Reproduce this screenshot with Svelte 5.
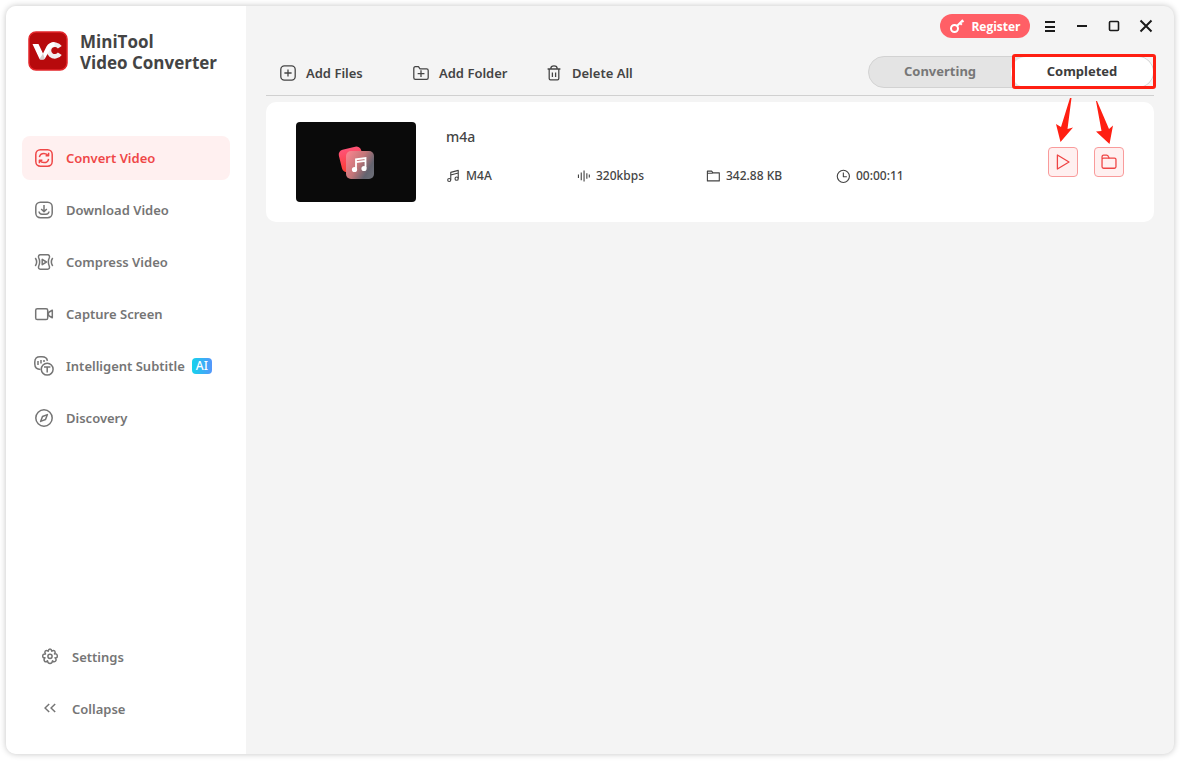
<script lang="ts">
	let section = $state('convert');
	let tab = $state('completed');

	const nav = [
		{ id: 'convert', label: 'Convert Video' },
		{ id: 'download', label: 'Download Video' },
		{ id: 'compress', label: 'Compress Video' },
		{ id: 'capture', label: 'Capture Screen' },
		{ id: 'subtitle', label: 'Intelligent Subtitle', badge: 'AI' },
		{ id: 'discovery', label: 'Discovery' }
	];

	const file = {
		name: 'm4a',
		meta: [
			{ icon: 'note', text: 'M4A' },
			{ icon: 'bitrate', text: '320kbps' },
			{ icon: 'size', text: '342.88 KB' },
			{ icon: 'clock', text: '00:00:11' }
		]
	};
</script>

{#snippet icon(name: string)}
	<svg class="icon" viewBox="0 0 20 20" aria-hidden="true">
		{#if name === 'convert'}
			<rect x="1.8" y="1.8" width="16.4" height="16.4" rx="4.6" />
			<path d="M5.4 9.2C5.8 6.8 7.7 5.4 10 5.4c1.8 0 3.2.8 4.2 2.2M14.6 4.8v3h-3M14.6 10.8c-.4 2.4-2.3 3.8-4.6 3.8-1.8 0-3.2-.8-4.2-2.2M5.4 15.2v-3h3" />
		{:else if name === 'download'}
			<rect x="1.8" y="2.3" width="16.4" height="15.4" rx="4.6" />
			<path d="M10 5v6.5M7.2 9l2.8 2.8L12.8 9M5 11.5c.3 1.9 1.3 2.7 3 2.7h4c1.7 0 2.7-.8 3-2.7" />
		{:else if name === 'compress'}
			<path d="M4.6 5.500C4.200 4 4.800 2.800 6.300 2.800h7.400c1.500 0 2.100 1.200 1.700 2.700M4.600 14.500C4.200 16 4.800 17.200 6.300 17.200h7.400c1.500 0 2.100-1.200 1.700-2.700M1.300 6c1.700 2.500 1.700 5.500 0 8M4.600 5.500c1.400 3 1.400 6 0 9M18.700 6c-1.700 2.500-1.700 5.500 0 8M15.400 5.500c-1.400 3-1.400 6 0 9M8.200 7.300v5.400l4.200-2.700z" />
		{:else if name === 'capture'}
			<rect x="1.7" y="4.7" width="12" height="10.8" rx="1.6" />
			<path d="M18.3 6.2v7.6L14.5 11.5v-3z" />
		{:else if name === 'subtitle'}
			<path d="M6.5 13.400C3 13.400.8 11.800.8 8V6C.8 2.400 2.600.8 6 .8h2c3 0 5 1.200 5.400 4M4 5v4M7 4v3.500M10 4v2" />
			<circle cx="13.2" cy="13.2" r="5.9" />
			<path d="M10 11h6.400M13.200 11v5.600" />
		{:else if name === 'discovery'}
			<circle cx="10" cy="10" r="8.2" />
			<path d="M13.4 6.6l-1.9 4.9-4.9 1.9 1.9-4.9z" />
		{:else if name === 'settings'}
			<path d="M8.200 4.200Q8.500 2 10 2t1.800 2.200Q13.600 2.900 14.700 4t-.2 2.900Q17.300 6.500 17.300 9t-2.300 1.800Q17 12.800 15.400 14.200t-2.900-.4Q12.300 16.600 10 16.600t-2.500-2.800Q5.900 15.700 4.600 14.200T5 10.800Q2.700 11.200 2.700 9t2.800-2.100Q4.200 5.100 5.300 4t2.900.2z" />
			<circle cx="10" cy="9.3" r="2.1" />
		{:else if name === 'collapse'}
			<path d="M9.2 5L5 9l4.2 4M15.2 5l-4.200 4 4.200 4" />
		{:else if name === 'add-file'}
			<rect x="1" y="1" width="18" height="18" rx="4.5" />
			<path d="M10 5.5v9M5.5 10h9" />
		{:else if name === 'add-folder'}
			<path d="M1 4.500c0-1.500.7-2.500 2-2.500h3.800l2 2.800H17c1.400 0 2 .6 2 2V16c0 1.400-.7 2-2 2H3c-1.300 0-2-.6-2-2zM10 6.500v8.500M5.800 10.700h8.500" />
		{:else if name === 'trash'}
			<path d="M2 5h16M4 5v12c0 1 .6 1.700 1.600 1.700h8.800c1 0 1.600-.7 1.600-1.700V5M6 4.500C6 2 7.300 1 10 1s4 1 4 3.500M8 9.500v5.500M12 9.500v5.500" />
		{:else if name === 'note'}
			<path d="M6.8 15.5V4.8L17.5 2v11.500M6.800 8.500l10.700-2.800" />
			<circle cx="4.6" cy="15.7" r="2.2" />
			<circle cx="15.2" cy="13.8" r="2.3" />
		{:else if name === 'bitrate'}
			<path d="M3.500 8v5M7.500 5v11M11.500 2v16M15.500 6v8M19 8v4" />
		{:else if name === 'size'}
			<path d="M2 3h6l2 2.500h9V17H2zM2 6h7.500" />
		{:else if name === 'clock'}
			<circle cx="10.5" cy="10.5" r="8.7" />
			<path d="M10.500 5v6h5" />
		{:else if name === 'folder'}
			<path d="M1.300 6V4c0-1.700.6-2.500 2-2.500h3.700c1 0 1.700.4 2.100 1.400L10.300 5.600" />
			<rect x="1.3" y="5.2" width="17.4" height="12.6" rx="1.8" />
		{:else if name === 'play'}
			<path d="M3 1.200v17.600L17.500 10z" />
		{/if}
	</svg>
{/snippet}

<div class="window">
	<aside>
		<div class="brand">
			<svg class="logo" viewBox="0 0 40 40" aria-hidden="true">
				<rect x="1" y="1" width="38" height="38" rx="7" fill="#b70a0c" stroke="#e3262a" stroke-width="1.5" />
				<path d="M31.800 16.300A5.900 5.900 0 1 0 31.800 22.700" fill="none" stroke="#f1eded" stroke-width="4.6" />
				<path d="M4.500 13h6l4.500 9.500 3.500-7q2.500-4.500 8-4.500v4.500q-3 .2-4.500 3L17 27.500q-.6 1-2 1h-2q-1.200 0-1.700-1z" fill="#fff" />
				<path d="M15 22.500l1.800 5.200q-.6.800-1.800.8h-2q-1 0-1.500-.6z" fill="#d5cfcf" />
			</svg>
			<h1>MiniTool<br />Video Converter</h1>
		</div>

		<nav aria-label="Main">
			{#each nav as item}
				<button class="item" class:active={section === item.id} onclick={() => (section = item.id)}>
					{@render icon(item.id)}
					{item.label}
					{#if item.badge}<span class="badge">{item.badge}</span>{/if}
				</button>
			{/each}
		</nav>

		<div class="bottom">
			<button class="item">{@render icon('settings')}Settings</button>
			<button class="item">{@render icon('collapse')}Collapse</button>
		</div>
	</aside>

	<main>
		<header>
			<button class="register">
				<svg viewBox="0 0 16 16" aria-hidden="true">
					<circle cx="5.5" cy="10.5" r="3.5" />
					<path d="M8.2 7.8L14 2M11 5l1.8 1.8M13 2.5l1.5 1.5" />
				</svg>
				Register
			</button>
			<button class="control" aria-label="Menu">
				<svg viewBox="0 0 16 16"><path d="M3 4h10M3 9h10M3 13h10" /></svg>
			</button>
			<button class="control" aria-label="Minimize">
				<svg viewBox="0 0 16 16"><path d="M3 8h10" /></svg>
			</button>
			<button class="control" aria-label="Maximize">
				<svg viewBox="0 0 16 16"><rect x="3.5" y="3.5" width="9" height="9" rx="1" stroke-width="1.6" /></svg>
			</button>
			<button class="control" aria-label="Close">
				<svg viewBox="0 0 16 16"><path d="M2.5 2.5l11 11M13.5 2.5l-11 11" /></svg>
			</button>
		</header>

		<div class="toolbar">
			<div class="actions">
				<button>{@render icon('add-file')}Add Files</button>
				<button>{@render icon('add-folder')}Add Folder</button>
				<button>{@render icon('trash')}Delete All</button>
			</div>
			<div class="tabs">
				<button class:active={tab === 'converting'} onclick={() => (tab = 'converting')}>Converting</button>
				<button class:active={tab === 'completed'} onclick={() => (tab = 'completed')}>Completed</button>
				<span class="highlight"></span>
			</div>
		</div>

		<article class="card">
			<div class="thumb">
				<svg viewBox="0 0 40 40" aria-hidden="true">
					<defs>
						<linearGradient id="back" x1="0" y1="0" x2="0" y2="1">
							<stop offset="0" stop-color="#ff5377" />
							<stop offset="1" stop-color="#fb3b30" />
						</linearGradient>
						<linearGradient id="glass" x1="0" y1="0.2" x2="1" y2="0.8">
							<stop offset="0" stop-color="#f5838d" />
							<stop offset="0.45" stop-color="#c37578" />
							<stop offset="0.8" stop-color="#63636f" />
							<stop offset="1" stop-color="#6b6d76" />
						</linearGradient>
					</defs>
					<rect x="4" y="6" width="23" height="23" rx="5" transform="rotate(-14 15 17)" fill="url(#back)" />
					<rect x="10" y="9" width="28" height="28" rx="5" fill="url(#glass)" />
					<path d="M20 27.5V17.3l9.5-1.3v10M20 20.2l9.5-1.3" fill="none" stroke="#fff" stroke-width="1.8" />
					<circle cx="18.5" cy="27.5" r="2.6" fill="#fff" />
					<circle cx="28" cy="26.5" r="2.6" fill="#fff" />
				</svg>
			</div>
			<div class="info">
				<h2>{file.name}</h2>
				<ul>
					{#each file.meta as m}
						<li>{@render icon(m.icon)}{m.text}</li>
					{/each}
				</ul>
			</div>
			<div class="open">
				<button aria-label="Play">{@render icon('play')}</button>
				<button aria-label="Open folder">{@render icon('folder')}</button>
				<svg class="arrows" viewBox="0 0 76 50" aria-hidden="true">
					<path d="M22 1h1.500l-4 31 5.500-1.500L12.500 45 8 27l5 3z" />
					<path d="M48 4h1l12 28 4-3.500L61.500 47 48 34.500l5.500-.5z" />
				</svg>
			</div>
		</article>
	</main>
</div>

<style>
	:global(body) {
		background: #fff;
	}

	.window {
		display: flex;
		box-sizing: border-box;
		min-height: calc(100vh - 14px);
		margin: 6px 6px 8px;
		border-radius: 10px;
		overflow: hidden;
		background: #f4f4f4;
		box-shadow: 0 0 6px rgba(0, 0, 0, 0.24);
		font-family: 'Noto Sans', 'Open Sans', sans-serif;
		color: #444;
	}

	button {
		border: 0;
		margin: 0;
		padding: 0;
		background: none;
		font: inherit;
		color: inherit;
		cursor: pointer;
	}

	svg {
		display: block;
		flex: none;
	}

	.icon {
		width: 16px;
		height: 16px;
		fill: none;
		stroke: currentColor;
		stroke-width: 1.6;
		stroke-linejoin: round;
	}

	aside {
		display: flex;
		flex-direction: column;
		flex: none;
		box-sizing: border-box;
		width: 240px;
		padding: 24px 16px 23px;
		background: #fff;
	}

	.brand {
		display: flex;
		align-items: center;
		gap: 12px;
		height: 42px;
		padding-left: 6px;
		margin-bottom: 64px;
	}

	.logo {
		width: 40px;
		height: 40px;
	}

	h1 {
		margin: 0;
		padding-top: 2px;
		font-family: 'Open Sans', 'Noto Sans', sans-serif;
		font-size: 17px;
		font-weight: 700;
		line-height: 21px;
		white-space: nowrap;
	}

	nav,
	.bottom {
		display: flex;
		flex-direction: column;
		gap: 8px;
	}

	.bottom {
		margin-top: auto;
		padding-left: 6px;
	}

	.item {
		display: flex;
		align-items: center;
		height: 44px;
		padding-left: 12px;
		border-radius: 8px;
		font-size: 13px;
		font-weight: 600;
		color: #757575;
		white-space: nowrap;
	}

	.item .icon {
		width: 20px;
		height: 20px;
		margin-right: 12px;
		stroke-width: 1.5;
	}

	.item.active {
		background: #fff0f0;
		color: #ef4747;
	}

	.badge {
		margin-left: 7px;
		padding: 0 4px;
		border-radius: 4px;
		background: linear-gradient(90deg, #14d3ec, #5596fb);
		font-size: 12px;
		font-weight: 500;
		line-height: 16px;
		color: #fff;
	}

	main {
		flex: 1;
		min-width: 0;
		padding: 8px 20px 20px;
	}

	header {
		display: flex;
		justify-content: flex-end;
		align-items: center;
		gap: 16px;
		height: 24px;
		margin-bottom: 18px;
	}

	.register {
		display: flex;
		align-items: center;
		justify-content: center;
		gap: 6px;
		width: 90px;
		height: 24px;
		margin-right: -4px;
		border-radius: 12px;
		background: #ff5f66;
		font-family: 'Open Sans', 'Noto Sans', sans-serif;
		font-size: 12px;
		font-weight: 700;
		color: #fff;
	}

	.register svg {
		width: 16px;
		height: 16px;
		fill: none;
		stroke: #fff;
		stroke-width: 2;
	}

	.control svg {
		width: 16px;
		height: 16px;
		fill: none;
		stroke: #1a1a1a;
		stroke-width: 2;
	}

	.toolbar {
		display: flex;
		justify-content: space-between;
		height: 39px;
		border-bottom: 1px solid #d0d0d0;
	}

	.actions {
		display: flex;
		height: 33px;
		padding-left: 14px;
	}

	.actions button {
		display: flex;
		align-items: center;
		gap: 10px;
		min-width: 133px;
		font-size: 13px;
		font-weight: 600;
		white-space: nowrap;
	}

	.tabs {
		position: relative;
		display: flex;
		box-sizing: border-box;
		width: 286px;
		height: 32px;
		border: 1px solid #d2d2d2;
		border-radius: 16px;
		background: #e4e4e4;
	}

	.tabs button {
		flex: 1;
		padding-bottom: 2px;
		border-radius: 16px;
		font-size: 13px;
		font-weight: 700;
		color: #777;
	}

	.tabs .active {
		background: #fff;
		color: #3c3c3c;
	}

	/* callout frame round the completed tab */
	.highlight {
		position: absolute;
		top: -3px;
		right: -3px;
		box-sizing: border-box;
		width: 144px;
		height: 35px;
		border: 3px solid #ff1f12;
		border-radius: 3px;
		pointer-events: none;
	}

	.card {
		display: flex;
		align-items: center;
		margin-top: 6px;
		padding: 20px 30px;
		border-radius: 10px;
		background: #fff;
	}

	.thumb {
		display: flex;
		align-items: center;
		justify-content: center;
		width: 120px;
		height: 80px;
		margin-right: 30px;
		border-radius: 4px;
		background: #0a0a0a;
	}

	.thumb svg {
		width: 40px;
		height: 40px;
	}

	.info {
		flex: 1;
		align-self: flex-start;
		padding-top: 5px;
	}

	h2 {
		margin: 0 0 20px;
		font-size: 14px;
		font-weight: 500;
		line-height: 20px;
	}

	ul {
		display: grid;
		grid-template-columns: repeat(4, 130px);
		margin: 0;
		padding: 0;
		list-style: none;
	}

	li {
		display: flex;
		align-items: center;
		gap: 6px;
		font-size: 12px;
		font-weight: 500;
		line-height: 18px;
		white-space: nowrap;
	}

	li .icon {
		width: 14px;
		height: 14px;
	}

	.open {
		position: relative;
		display: flex;
		gap: 16px;
	}

	.open button {
		display: flex;
		align-items: center;
		justify-content: center;
		box-sizing: border-box;
		width: 30px;
		height: 30px;
		border: 1px solid #f99b9b;
		border-radius: 4px;
		background: #fff0f0;
		color: #ef4444;
	}

	.open .icon {
		width: 16px;
		height: 16px;
	}

	.arrows {
		position: absolute;
		left: 0;
		bottom: 100%;
		width: 76px;
		height: 50px;
		fill: #ff1f12;
		pointer-events: none;
	}
</style>
